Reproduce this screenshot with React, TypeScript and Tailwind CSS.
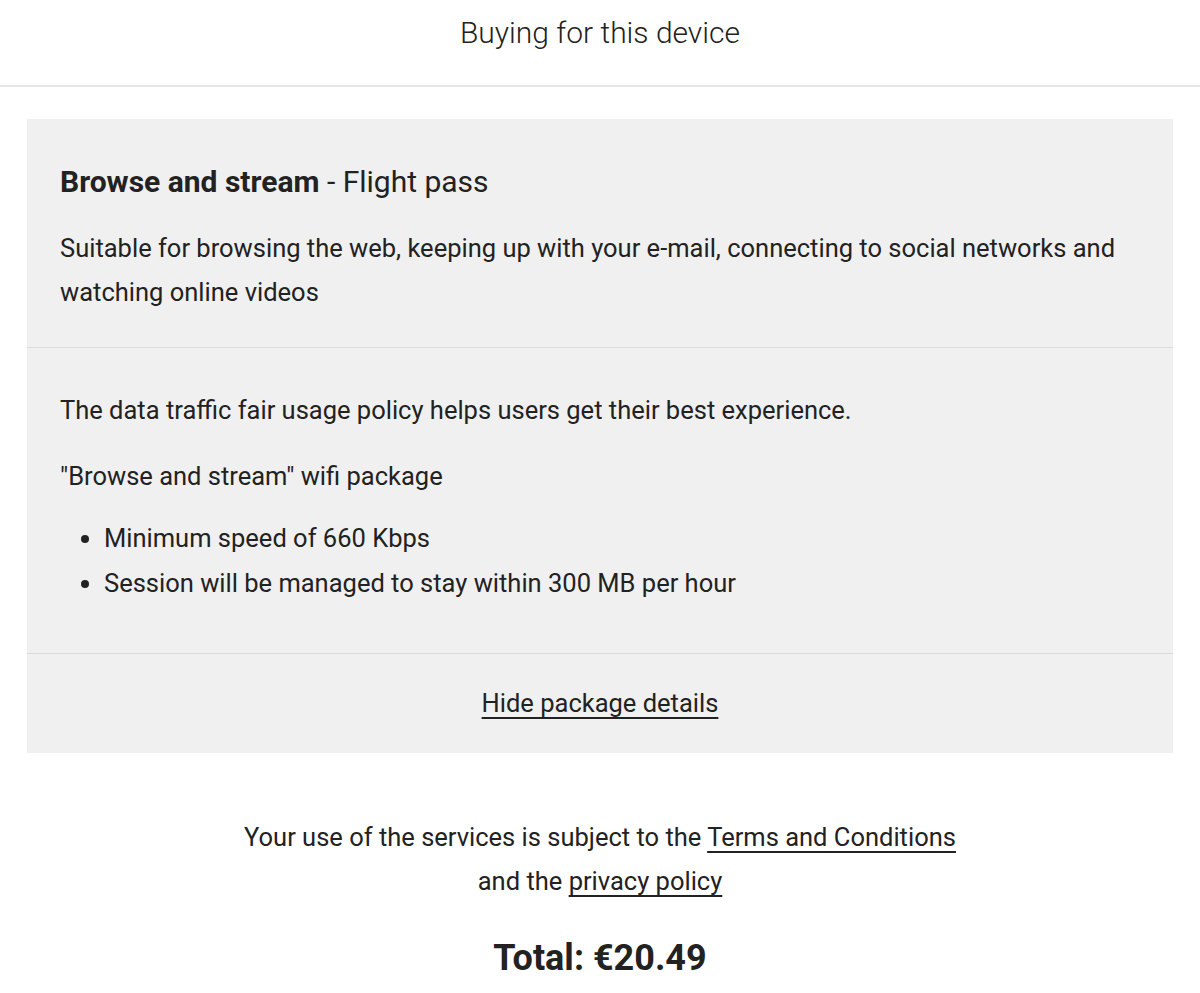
import React from 'react';

const font = { fontFamily: 'Roboto, "Noto Sans", sans-serif' };

export default function App() {
  return (
    <div className="min-h-[993px] bg-white text-[#222]" style={font}>
      <header className="flex h-[87px] items-center justify-center border-b-2 border-[#e6e6e6] pb-[20px]">
        <h1 className="text-[30px] font-light leading-none">Buying for this device</h1>
      </header>

      <div className="px-[27px] pt-[32px]">
        <div className="bg-[#f0f0f0]">
          <section className="border-b border-[#dcdcdc] px-[33px] pb-[33px] pt-[46px]">
            <h2 className="text-[30px] leading-[34px]">
              <span className="font-bold">Browse and stream</span> - Flight pass
            </h2>
            <p className="mt-[27px] text-[25.5px] leading-[44px]">
              Suitable for browsing the web, keeping up with your e-mail, connecting to social networks and
              watching online videos
            </p>
          </section>

          <section className="border-b border-[#dcdcdc] px-[33px] pb-[47px] pt-[42px]">
            <p className="text-[25.5px] leading-[40px]">
              The data traffic fair usage policy helps users get their best experience.
            </p>
            <p className="mt-[26px] text-[25.5px] leading-[40px]">"Browse and stream" wifi package</p>
            <ul className="mt-[20px] list-disc pl-[44px] text-[25.5px] leading-[45px]">
              <li>Minimum speed of 660 Kbps</li>
              <li>Session will be managed to stay within 300 MB per hour</li>
            </ul>
          </section>

          <div className="flex h-[99px] items-center justify-center">
            <a href="#" className="text-[25.5px] underline underline-offset-[5px]">
              Hide package details
            </a>
          </div>
        </div>
      </div>

      <div className="mt-[62px] text-center text-[25.5px] leading-[44px]">
        <p>
          Your use of the services is subject to the{' '}
          <a href="#" className="underline underline-offset-[5px]">
            Terms and Conditions
          </a>
        </p>
        <p>
          and the{' '}
          <a href="#" className="underline underline-offset-[5px]">
            privacy policy
          </a>
        </p>
      </div>

      <p className="mt-[37px] text-center text-[36px] font-bold leading-none">Total: €20.49</p>
    </div>
  );
}
